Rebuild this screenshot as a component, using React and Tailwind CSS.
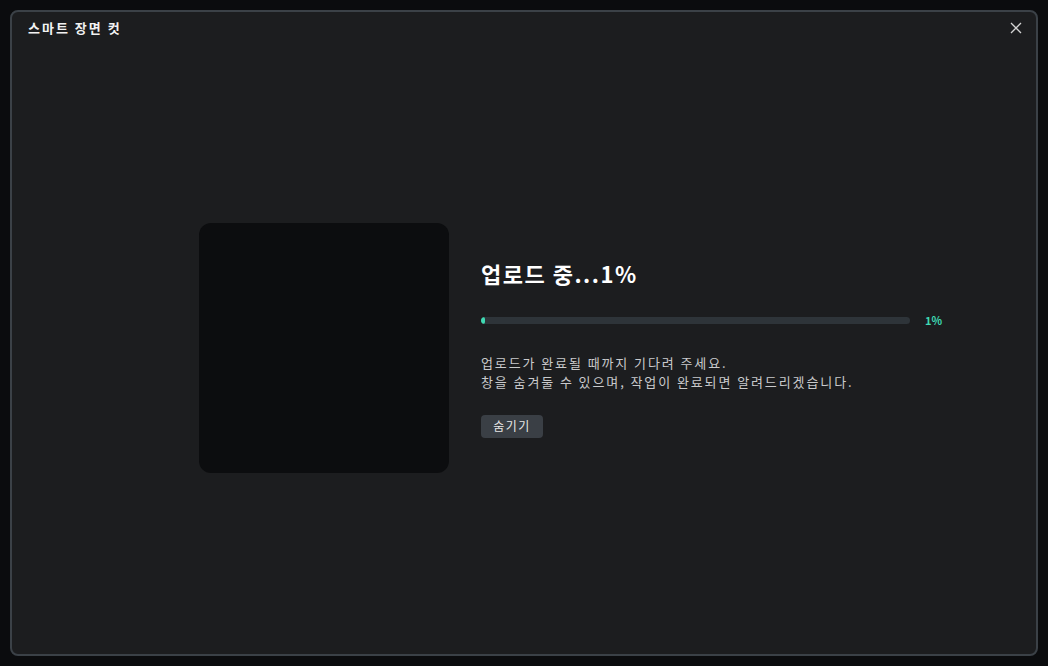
import React from 'react';

const font = { fontFamily: '"Noto Sans CJK KR", "Noto Sans", sans-serif' };

const CloseIcon = () => (
    <svg className="w-[12px] h-[12px]" viewBox="0 0 12 12" fill="none" stroke="currentColor" strokeWidth="1.3">
        <path d="M1 1l10 10M11 1L1 11" />
    </svg>
);

const App = () => {
    const progress = 1;

    return (
        <div className="w-[1048px] h-[666px] bg-[#0b0c0e] p-[10px]" style={font}>
            <div className="w-full h-full flex flex-col bg-[#1c1d1f] border-2 border-[#3b4147] rounded-[8px]">
                {/* Header */}
                <div className="flex items-center justify-between h-[32px] pl-[16px] pr-[14px]">
                    <h2 className="text-[13px] font-bold text-[#f2f2f2] tracking-[2px]">스마트 장면 컷</h2>
                    <button className="text-[#d4d4d4]">
                        <CloseIcon />
                    </button>
                </div>

                {/* Body */}
                <div className="flex-1 flex items-center pl-[187px] pb-[2px]">
                    <div className="w-[250px] h-[250px] rounded-[12px] bg-[#0c0d0f] shrink-0" />

                    <div className="ml-[32px] w-[462px] mt-[4px]">
                        <h1 className="text-[22px] font-bold text-white leading-none tracking-[1.5px]">업로드 중...1%</h1>

                        <div className="flex items-center mt-[28px]">
                            <div className="w-[429px] h-[7px] rounded-full bg-[#2e3439] overflow-hidden">
                                <div className="h-full bg-[#3fd9b2] rounded-[2px]" style={{ width: `${Math.max(progress, 1)}%` }} />
                            </div>
                            <span className="ml-[15px] text-[11px] font-bold text-[#3fd9b2]">1%</span>
                        </div>

                        <div className="mt-[24px] text-[13px] text-[#c9cacc] leading-[19px] tracking-[1.9px]">
                            <p>업로드가 완료될 때까지 기다려 주세요.</p>
                            <p>창을 숨겨둘 수 있으며, 작업이 완료되면 알려드리겠습니다.</p>
                        </div>

                        <button className="mt-[24px] h-[23px] w-[62px] rounded-[4px] bg-[#3a3f45] text-[12px] text-[#e6e6e6] tracking-[1.5px]">
                            숨기기
                        </button>
                    </div>
                </div>
            </div>
        </div>
    );
};

export default App;
